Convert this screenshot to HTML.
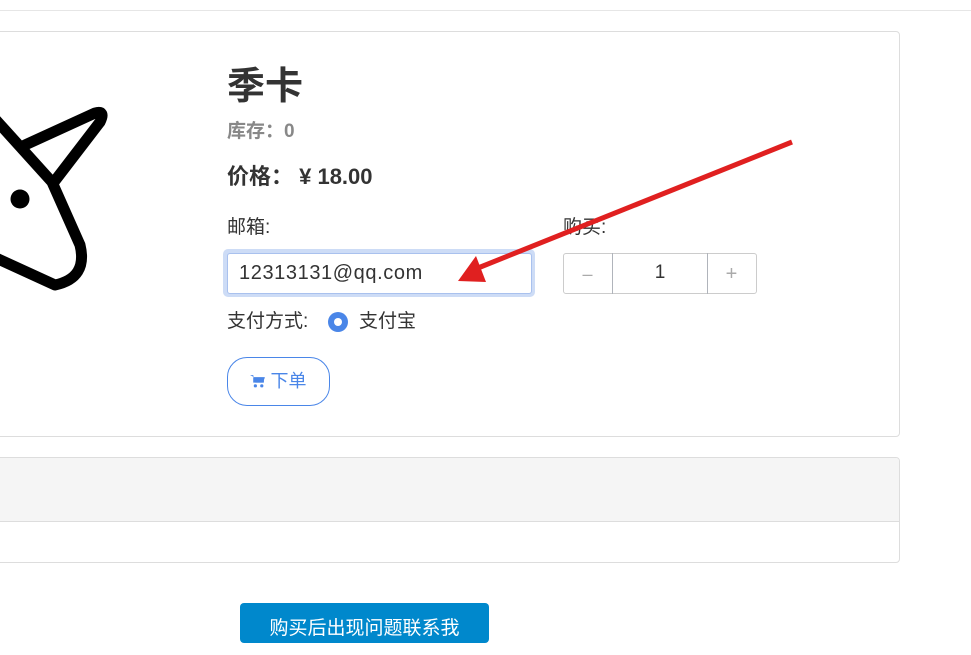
<!DOCTYPE html>
<html><head><meta charset="utf-8"><style>
body{margin:0;width:971px;height:630px;overflow:hidden;background:#fff;font-family:"Liberation Sans","Noto Sans CJK SC",sans-serif;position:relative;color:#333}
.a{position:absolute}
</style></head><body>
<div class="a" style="left:0;top:10px;width:971px;height:1px;background:#e6e6e6"></div>
<div class="a" style="left:-10px;top:31px;width:908px;height:404px;border:1px solid #ddd;border-radius:4px"></div>
<svg class="a" style="left:0;top:100px" width="120" height="200" viewBox="0 100 120 200">
<g fill="none" stroke="#000" stroke-width="11" stroke-linecap="round" stroke-linejoin="round">
<path d="M-4 120 L52 182 L80 245 Q88 278 55 285 L-4 258"/>
<path d="M25 145 L95 113 Q106 110 100 122 L54 182"/>
</g>
<circle cx="20" cy="199" r="9.5" fill="#000"/>
</svg>
<div class="a" style="left:227px;top:64px;font-size:38px;font-weight:bold;color:#333;line-height:46px">季卡</div>
<div class="a" style="left:227px;top:120px;font-size:19px;font-weight:bold;color:#888;line-height:24px">库存：0</div>
<div class="a" style="left:227px;top:163px;font-size:22px;font-weight:bold;color:#333;line-height:28px">价格： ¥ 18.00</div>
<div class="a" style="left:227px;top:216px;font-size:19px;color:#333;line-height:24px">邮箱:</div>
<div class="a" style="left:223px;top:249px;width:312px;height:48px;border-radius:5px;background:#cddcf6"></div>
<div class="a" style="left:227px;top:253px;width:305px;height:41px;border:1px solid #a9c1ee;border-radius:3px;background:#fff;box-sizing:border-box;font-size:20px;line-height:39px;padding-left:11px;color:#333;letter-spacing:0.6px">12313131@qq.com</div>
<div class="a" style="left:563px;top:216px;font-size:19px;color:#333;line-height:24px">购买:</div>
<div class="a" style="left:563px;top:253px;width:194px;height:41px;border:1px solid #ccc;border-radius:3px;box-sizing:border-box"></div>
<div class="a" style="left:612px;top:253px;width:96px;height:41px;border-left:1px solid #b0b4bb;border-right:1px solid #b0b4bb;box-sizing:border-box;text-align:center;font-size:19px;line-height:39px">1</div>
<div class="a" style="left:563px;top:253px;width:49px;height:41px;text-align:center;font-size:18px;line-height:42px;color:#aaa">–</div>
<div class="a" style="left:707px;top:253px;width:49px;height:41px;text-align:center;font-size:20px;line-height:42px;color:#aaa">+</div>
<div class="a" style="left:227px;top:310px;font-size:19px;color:#333;line-height:24px">支付方式:</div>
<div class="a" style="left:328px;top:312px;width:20px;height:20px;border-radius:50%;background:#4a86e8"></div>
<div class="a" style="left:334px;top:318px;width:8px;height:8px;border-radius:50%;background:#fff"></div>
<div class="a" style="left:359px;top:310px;font-size:19px;color:#333;line-height:24px">支付宝</div>
<div class="a" style="left:227px;top:357px;width:103px;height:49px;border:1px solid #4a86e8;border-radius:20px;box-sizing:border-box;color:#4a86e8;font-size:18px;line-height:47px;text-align:center"><svg width="15" height="14" viewBox="0 0 14 13" style="vertical-align:-1px"><path d="M0 1h3l2 7h7l2-5H4" fill="#4a86e8"/><rect x="3" y="3" width="10" height="5" fill="#4a86e8"/><circle cx="5" cy="11" r="1.5" fill="#4a86e8"/><circle cx="11" cy="11" r="1.5" fill="#4a86e8"/></svg> 下单</div>
<div class="a" style="left:-10px;top:457px;width:908px;height:104px;border:1px solid #ddd;border-radius:4px;overflow:hidden"><div style="height:63px;background:#f5f5f5;border-bottom:1px solid #ddd"></div></div>
<div class="a" style="left:240px;top:603px;width:249px;height:40px;background:#0088cc;border-radius:4px;color:#fff;font-size:19px;text-align:center;line-height:52px">购买后出现问题联系我</div>
<svg class="a" style="left:0;top:0" width="971" height="630"><line x1="792" y1="142" x2="478" y2="268" stroke="#e02020" stroke-width="5"/><polygon points="458,281 476,256 486,282" fill="#e02020"/></svg>
</body></html>
